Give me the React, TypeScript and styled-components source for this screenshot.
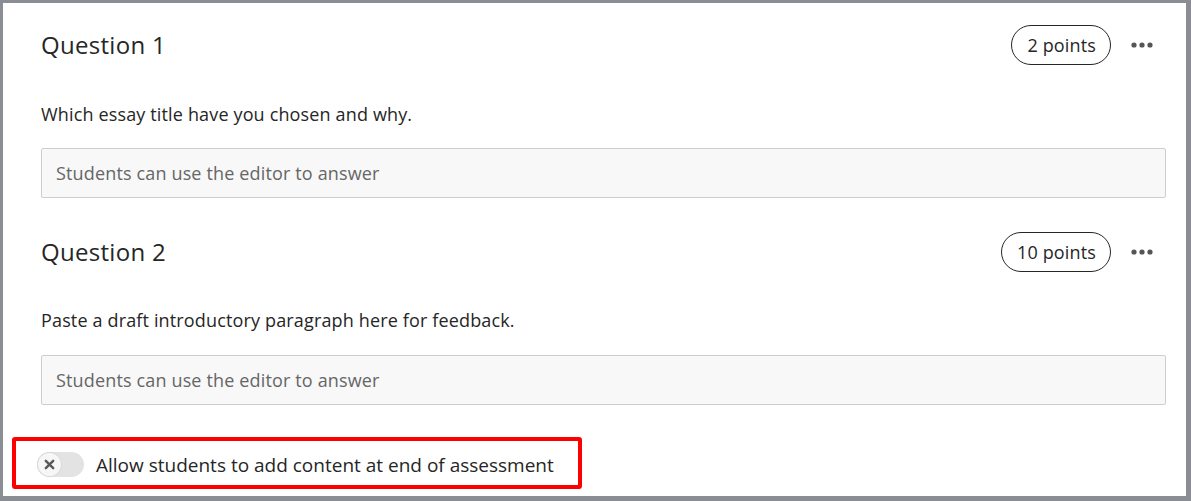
import React from 'react';
import styled, { createGlobalStyle } from 'styled-components';

const GlobalStyle = createGlobalStyle`
  html, body {
    margin: 0;
    padding: 0;
    background: #ffffff;
  }
  body {
    font-family: "Open Sans", "Noto Sans", sans-serif;
    color: #262626;
  }
  * {
    box-sizing: border-box;
  }
`;

const Frame = styled.div`
  width: 1191px;
  height: 501px;
  border-style: solid;
  border-color: #8a8d94;
  border-width: 3px 5px 5px 3px;
  padding: 22px 20px 0 38px;
  background: #ffffff;
  overflow: hidden;
`;

const Question = styled.section`
  display: flex;
  flex-direction: column;
  & + & {
    margin-top: 34px;
  }
`;

const Header = styled.div`
  display: flex;
  align-items: center;
  justify-content: space-between;
  height: 40px;
`;

const Title = styled.h2`
  margin: 0 0 2px;
  font-size: 24px;
  letter-spacing: 0.3px;
  font-weight: 400;
  color: #262626;
`;

const Actions = styled.div`
  display: flex;
  align-items: center;
  gap: 18px;
`;

const Points = styled.span`
  display: inline-flex;
  align-items: center;
  height: 40px;
  padding: 0 14px 0 15px;
  border: 1px solid #262626;
  border-radius: 20px;
  font-size: 18px;
  letter-spacing: 0.15px;
  color: #262626;
`;

const MoreButton = styled.button`
  border: none;
  background: none;
  padding: 0;
  margin-right: 11px;
  width: 26px;
  height: 24px;
  display: flex;
  align-items: center;
  justify-content: center;
  cursor: pointer;
`;

const Prompt = styled.p<{ $gap: number }>`
  margin: ${p => p.$gap}px 0 0;
  font-size: 18px;
  letter-spacing: 0.15px;
  line-height: 24px;
`;

const AnswerBox = styled.div<{ $gap: number }>`
  margin-top: ${p => p.$gap}px;
  height: 50px;
  display: flex;
  align-items: center;
  padding: 0 14px;
  background: #f8f8f8;
  border: 1px solid #cdcdcd;
  border-radius: 2px;
  font-size: 18px;
  letter-spacing: 0.15px;
  color: #666666;
`;

const Highlight = styled.div`
  display: flex;
  align-items: center;
  gap: 12px;
  width: fit-content;
  height: 52px;
  margin: 32px 0 0 -29px;
  padding: 3px 24px 0 21px;
  border: 4px solid #ff0000;
  border-radius: 3px;
`;

const Switch = styled.span`
  position: relative;
  display: inline-block;
  width: 47px;
  height: 25px;
  border-radius: 13px;
  background: #e3e3e3;
`;

const Knob = styled.span`
  position: absolute;
  left: 1px;
  top: 1px;
  width: 23px;
  height: 23px;
  border-radius: 50%;
  background: #f6f6f6;
  box-shadow: 0 0 0 1px #d8d8d8;
  display: flex;
  align-items: center;
  justify-content: center;
`;

const SwitchLabel = styled.span`
  font-size: 19px;
  color: #262626;
`;

const Dots = () => (
  <svg width="22" height="6" viewBox="0 0 22 6">
    <circle cx="3" cy="3" r="2.6" fill="#555" />
    <circle cx="11" cy="3" r="2.6" fill="#555" />
    <circle cx="19" cy="3" r="2.6" fill="#555" />
  </svg>
);

const Cross = () => (
  <svg width="11" height="11" viewBox="0 0 11 11">
    <path d="M1.8 1.8 L9.2 9.2 M9.2 1.8 L1.8 9.2" stroke="#585858" strokeWidth="2.4" strokeLinecap="round" />
  </svg>
);

type Q = { title: string; points: string; prompt: string; gaps: [number, number] };

const questions: Q[] = [
  { title: 'Question 1', points: '2 points', prompt: 'Which essay title have you chosen and why.', gaps: [37, 22] },
  { title: 'Question 2', points: '10 points', prompt: 'Paste a draft introductory paragraph here for feedback.', gaps: [36, 23] },
];

export default function App() {
  return (
    <>
      <GlobalStyle />
      <Frame>
        {questions.map(q => (
          <Question key={q.title}>
            <Header>
              <Title>{q.title}</Title>
              <Actions>
                <Points>{q.points}</Points>
                <MoreButton aria-label="More options">
                  <Dots />
                </MoreButton>
              </Actions>
            </Header>
            <Prompt $gap={q.gaps[0]}>{q.prompt}</Prompt>
            <AnswerBox $gap={q.gaps[1]}>Students can use the editor to answer</AnswerBox>
          </Question>
        ))}
        <Highlight>
          <Switch>
            <Knob>
              <Cross />
            </Knob>
          </Switch>
          <SwitchLabel>Allow students to add content at end of assessment</SwitchLabel>
        </Highlight>
      </Frame>
    </>
  );
}
